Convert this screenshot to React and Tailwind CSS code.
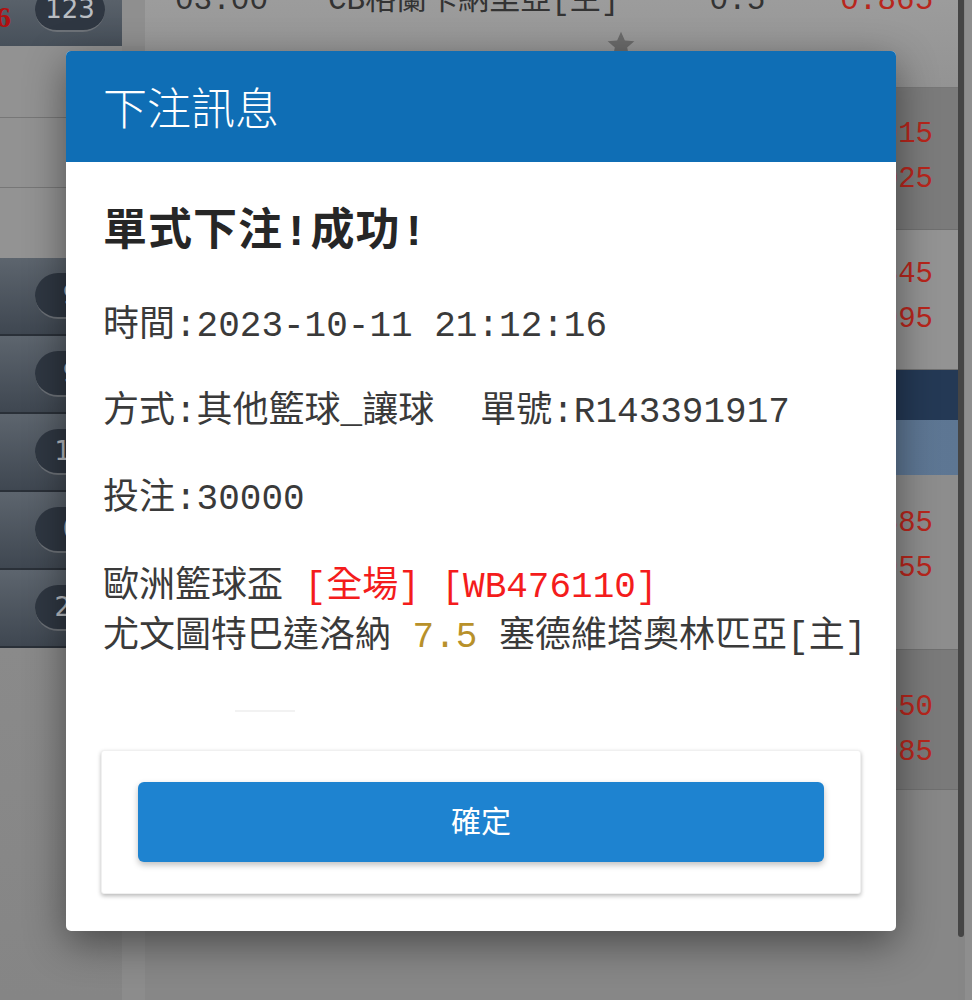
import React from "react";

const mono = "font-['Liberation_Mono','Noto_Sans_CJK_TC',monospace]";

function Pill({ text }) {
  return (
    <div className="ml-[35px] h-[46px] w-[72px] rounded-full bg-[#2f3742] border-b-2 border-[#6d7278] flex items-center justify-center text-[26px] text-[#b9bdc2] font-['DejaVu_Sans',sans-serif]">
      {text}
    </div>
  );
}

function DarkRow({ text }) {
  return (
    <div className="h-[78px] border-b-2 border-[#2a3038] bg-gradient-to-b from-[#5d656e] to-[#3f4751] flex items-center">
      <Pill text={text} />
    </div>
  );
}

function RedNums({ a, b, cls }) {
  return (
    <div className={`${cls} border-b border-[#6f6f6f] flex flex-col justify-center items-end pr-[25px] gap-[15px] ${mono} text-[29px] leading-[30px] text-[#b8261c]`}>
      <span>{a}</span>
      <span>{b}</span>
    </div>
  );
}

export default function App() {
  return (
    <div className="relative w-[972px] h-[1000px] overflow-hidden bg-[#868686] font-['Noto_Sans_CJK_TC',sans-serif]">
      {/* background page */}
      <div className="flex h-full">
        {/* left column */}
        <div className="w-[122px] flex flex-col">
          <div className="h-[46px] bg-gradient-to-b from-[#59616a] to-[#47505a] flex items-start relative">
            <span className="absolute left-[-4px] top-[-6px] text-[30px] font-bold text-[#b01010] font-['Liberation_Serif',serif]">6</span>
            <div className="ml-[35px] -mt-[12px] h-[44px] w-[70px] rounded-full bg-[#2f3742] border-b-2 border-[#6d7278] flex items-center justify-center text-[26px] text-[#b9bdc2] font-['DejaVu_Sans',sans-serif]">
              123
            </div>
          </div>
          <div className="h-[72px] bg-[#929292] border-b border-[#777]" />
          <div className="h-[70px] bg-[#929292] border-b border-[#777]" />
          <div className="h-[70px] bg-[#939393]" />
          <DarkRow text="9" />
          <DarkRow text="9" />
          <DarkRow text="12" />
          <DarkRow text="0" />
          <DarkRow text="22" />
          <div className="flex-1 bg-gradient-to-b from-[#8a8a8a] to-[#858585]" />
        </div>
        {/* spacer */}
        <div className="w-[23px] flex flex-col">
          <div className="h-[46px] bg-[#8f8f8f]" />
          <div className="flex-1 bg-[#8c8c8c]" />
        </div>
        {/* main list */}
        <div className="w-[813px] flex flex-col">
          <div className="h-[88px] bg-gradient-to-b from-[#9c9c9c] to-[#939393] border-b border-[#777] relative">
            <div className={`absolute top-[-22px] left-[30px] flex items-center text-[31px] text-[#333] whitespace-nowrap ${mono}`}>
              <span>03:00</span>
              <span className="ml-[60px]">CB格蘭卡納里亞[主]</span>
              <span className="ml-[90px]">0.5</span>
              <span className="ml-[75px] text-[#b8261c]">0.865</span>
            </div>
            <svg className="absolute left-[459px] top-[29px]" width="34" height="32" viewBox="0 0 24 24">
              <path d="M12 2l2.9 6.6 7.1.6-5.4 4.7 1.6 7-6.2-3.7-6.2 3.7 1.6-7L2 9.2l7.1-.6z" fill="#6b6b6b" />
            </svg>
          </div>
          <RedNums a="0.915" b="1.025" cls="h-[142px] bg-[#7b7b7b] pb-[2px]" />
          <RedNums a="0.845" b="0.995" cls="h-[140px] bg-[#939393] pb-[4px]" />
          <div className="h-[50px] bg-[#243955]" />
          <div className="h-[55px] bg-gradient-to-r from-[#6e86a2] to-[#5d7693]" />
          <RedNums a="0.885" b="0.955" cls="h-[175px] bg-[#8d8d8d] pb-[32px]" />
          <RedNums a="0.850" b="0.985" cls="h-[140px] bg-[#7a7a7a] pt-[22px]" />
          <div className="flex-1 bg-[#878787]" />
        </div>
        {/* scrollbar */}
        <div className="w-[7px] flex flex-col">
          <div className="h-[937px] w-[6px] rounded-b-full bg-[#454545]" />
        </div>
        <div className="flex-1 bg-[#8e8e8e]" />
      </div>

      {/* dialog */}
      <div className="absolute left-[66px] top-[51px] w-[830px] h-[880px] bg-white rounded-[5px] shadow-[0_12px_40px_rgba(0,0,0,0.45)] overflow-hidden flex flex-col">
        <div className="h-[111px] bg-[#0f6eb5] flex items-center pl-[37px] text-white text-[44px] leading-none font-['Noto_Sans_CJK_TC',sans-serif] font-light pb-[2px]">
          下注訊息
        </div>
        <div className={`px-[37px] ${mono} text-[#3a3a3a]`}>
          <div className="mt-[41px] text-[44px] leading-[60px] font-bold text-[#262626] tracking-[1px]">單式下注!成功!</div>
          <div className="mt-[39px] text-[36px] leading-[50px]">時間:2023-10-11 21:12:16</div>
          <div className="mt-[36px] text-[36px] leading-[50px] flex">
            <span>方式:其他籃球_讓球</span>
            <span className="ml-[46px]">單號:R143391917</span>
          </div>
          <div className="mt-[37px] text-[36px] leading-[50px]">投注:30000</div>
          <div className="mt-[38px] text-[36px] leading-[50px] whitespace-nowrap">
            歐洲籃球盃 <span className="text-[#f41c1c]">[全場] [WB476110]</span>
          </div>
          <div className="text-[36px] leading-[50px] whitespace-nowrap">
            尤文圖特巴達洛納 <span className="text-[#b8912a]">7.5</span> 塞德維塔奧林匹亞[主]
          </div>
          <div className="ml-[132px] mt-[47px] h-[2px] w-[60px] bg-[#f2f2f2]" />
        </div>
        <div className="mx-[35px] mt-[38px] h-[144px] rounded-[3px] bg-white shadow-[0_2px_4px_rgba(0,0,0,0.28)] border border-[#f0f0f0] px-[36px] py-[31px]">
          <div className="h-[80px] pb-[6px] rounded-[6px] bg-[#1e83d0] shadow-[0_3px_6px_rgba(0,0,0,0.25)] flex items-center justify-center text-white text-[30px] font-normal font-['Noto_Sans_CJK_TC',sans-serif]">
            確定
          </div>
        </div>
      </div>
    </div>
  );
}
